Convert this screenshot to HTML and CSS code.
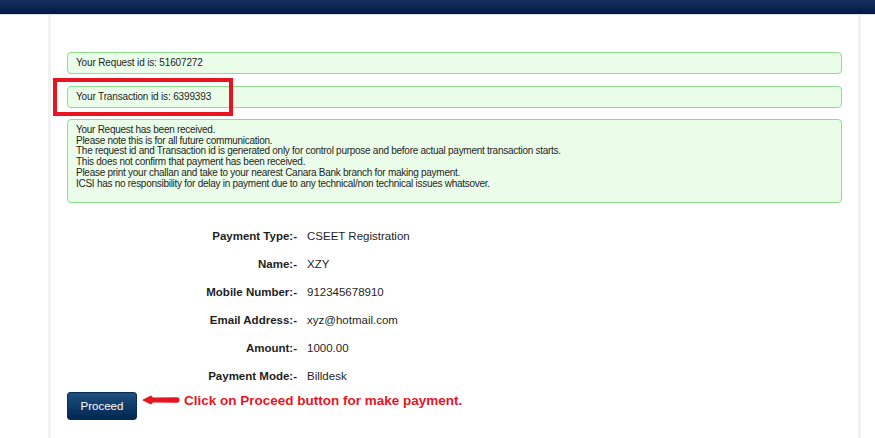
FILE: index.html
```html
<!DOCTYPE html>
<html lang="en">
<head>
  <meta charset="UTF-8" />
  <title>Payment Request</title>
  <link rel="stylesheet" href="styles.css">
</head>
<body>
  <div class="topbar"></div>

  <div class="container">
    <div class="msg">Your Request id is: 51607272</div>

    <div class="msg highlight">
      Your Transaction id is: 6399393
      <span class="mark"></span>
    </div>

    <div class="msg notes">
      Your Request has been received.<br />
      Please note this is for all future communication.<br />
      The request id and Transaction id is generated only for control purpose and before actual payment transaction starts.<br />
      This does not confirm that payment has been received.<br />
      Please print your challan and take to your nearest Canara Bank branch for making payment.<br />
      ICSI has no responsibility for delay in payment due to any technical/non technical issues whatsover.
    </div>

    <div class="details">
      <div class="label">Payment Type:-</div>
      <div class="value">CSEET Registration</div>
      <div class="label">Name:-</div>
      <div class="value">XZY</div>
      <div class="label">Mobile Number:-</div>
      <div class="value">912345678910</div>
      <div class="label">Email Address:-</div>
      <div class="value">xyz@hotmail.com</div>
      <div class="label">Amount:-</div>
      <div class="value">1000.00</div>
      <div class="label">Payment Mode:-</div>
      <div class="value">Billdesk</div>
    </div>

    <div class="proceed-row">
      <button class="btn-proceed">Proceed</button>
      <svg class="arrow" width="38" height="12" viewBox="0 0 38 12">
        <path d="M0 6 L9 1.5 L11 3.5 L35 3.2 Q37.5 3.2 37.5 6 Q37.5 8.8 35 8.8 L11 8.5 L9 10.5 Z" fill="#e5161f" />
      </svg>
      <span class="hint">Click on Proceed button for make payment.</span>
    </div>
  </div>
</body>
</html>
```

FILE: styles.css
```css
body {
  margin: 0;
  background: #fff;
  font-family: "Liberation Sans", Arial, sans-serif;
  color: #1e1e1e;
}

.topbar {
  height: 14px;
  background: linear-gradient(#16325f, #011843);
  border-bottom: 1px solid #d8dde6;
}

.container {
  margin-left: 48px;
  width: 813px;
  min-height: 423px;
  box-sizing: border-box;
  border-left: 3px solid #f2f2f2;
  border-right: 3px solid #f2f2f2;
  padding: 37px 16px 0 16px;
}

.msg {
  position: relative;
  background: #eafde9;
  border: 1px solid #8ddd8d;
  border-radius: 4px;
  padding: 5px 8px;
  font-size: 10px;
  line-height: 10px;
  letter-spacing: -0.15px;
  margin-bottom: 12px;
}

.notes {
  margin-top: -1px;
  padding: 5px 8px 13px;
  line-height: 10.7px;
  letter-spacing: -0.27px;
}

.mark {
  position: absolute;
  left: -15px;
  top: -9px;
  width: 172px;
  height: 30px;
  border: 4px solid #e8141f;
}

.details {
  display: grid;
  grid-template-columns: 230px auto;
  column-gap: 10px;
  grid-auto-rows: 28px;
  align-items: center;
  margin-top: 19px;
  font-size: 11.5px;
}

.label {
  text-align: right;
  font-weight: bold;
}

.proceed-row {
  display: flex;
  align-items: flex-start;
  margin-top: 2px;
}

.btn-proceed {
  width: 70px;
  height: 28px;
  border: 1px solid #0c2d52;
  border-radius: 3px;
  background: linear-gradient(#1f4f82, #00284f);
  color: #fff;
  font-family: "Liberation Sans", Arial, sans-serif;
  font-size: 11.5px;
  cursor: pointer;
}

.arrow {
  margin-left: 5px;
  margin-top: 2px;
}

.hint {
  margin-left: 4px;
  margin-top: 1px;
  line-height: 15px;
  color: #e5161f;
  font-weight: bold;
  font-size: 13.5px;
}
```
